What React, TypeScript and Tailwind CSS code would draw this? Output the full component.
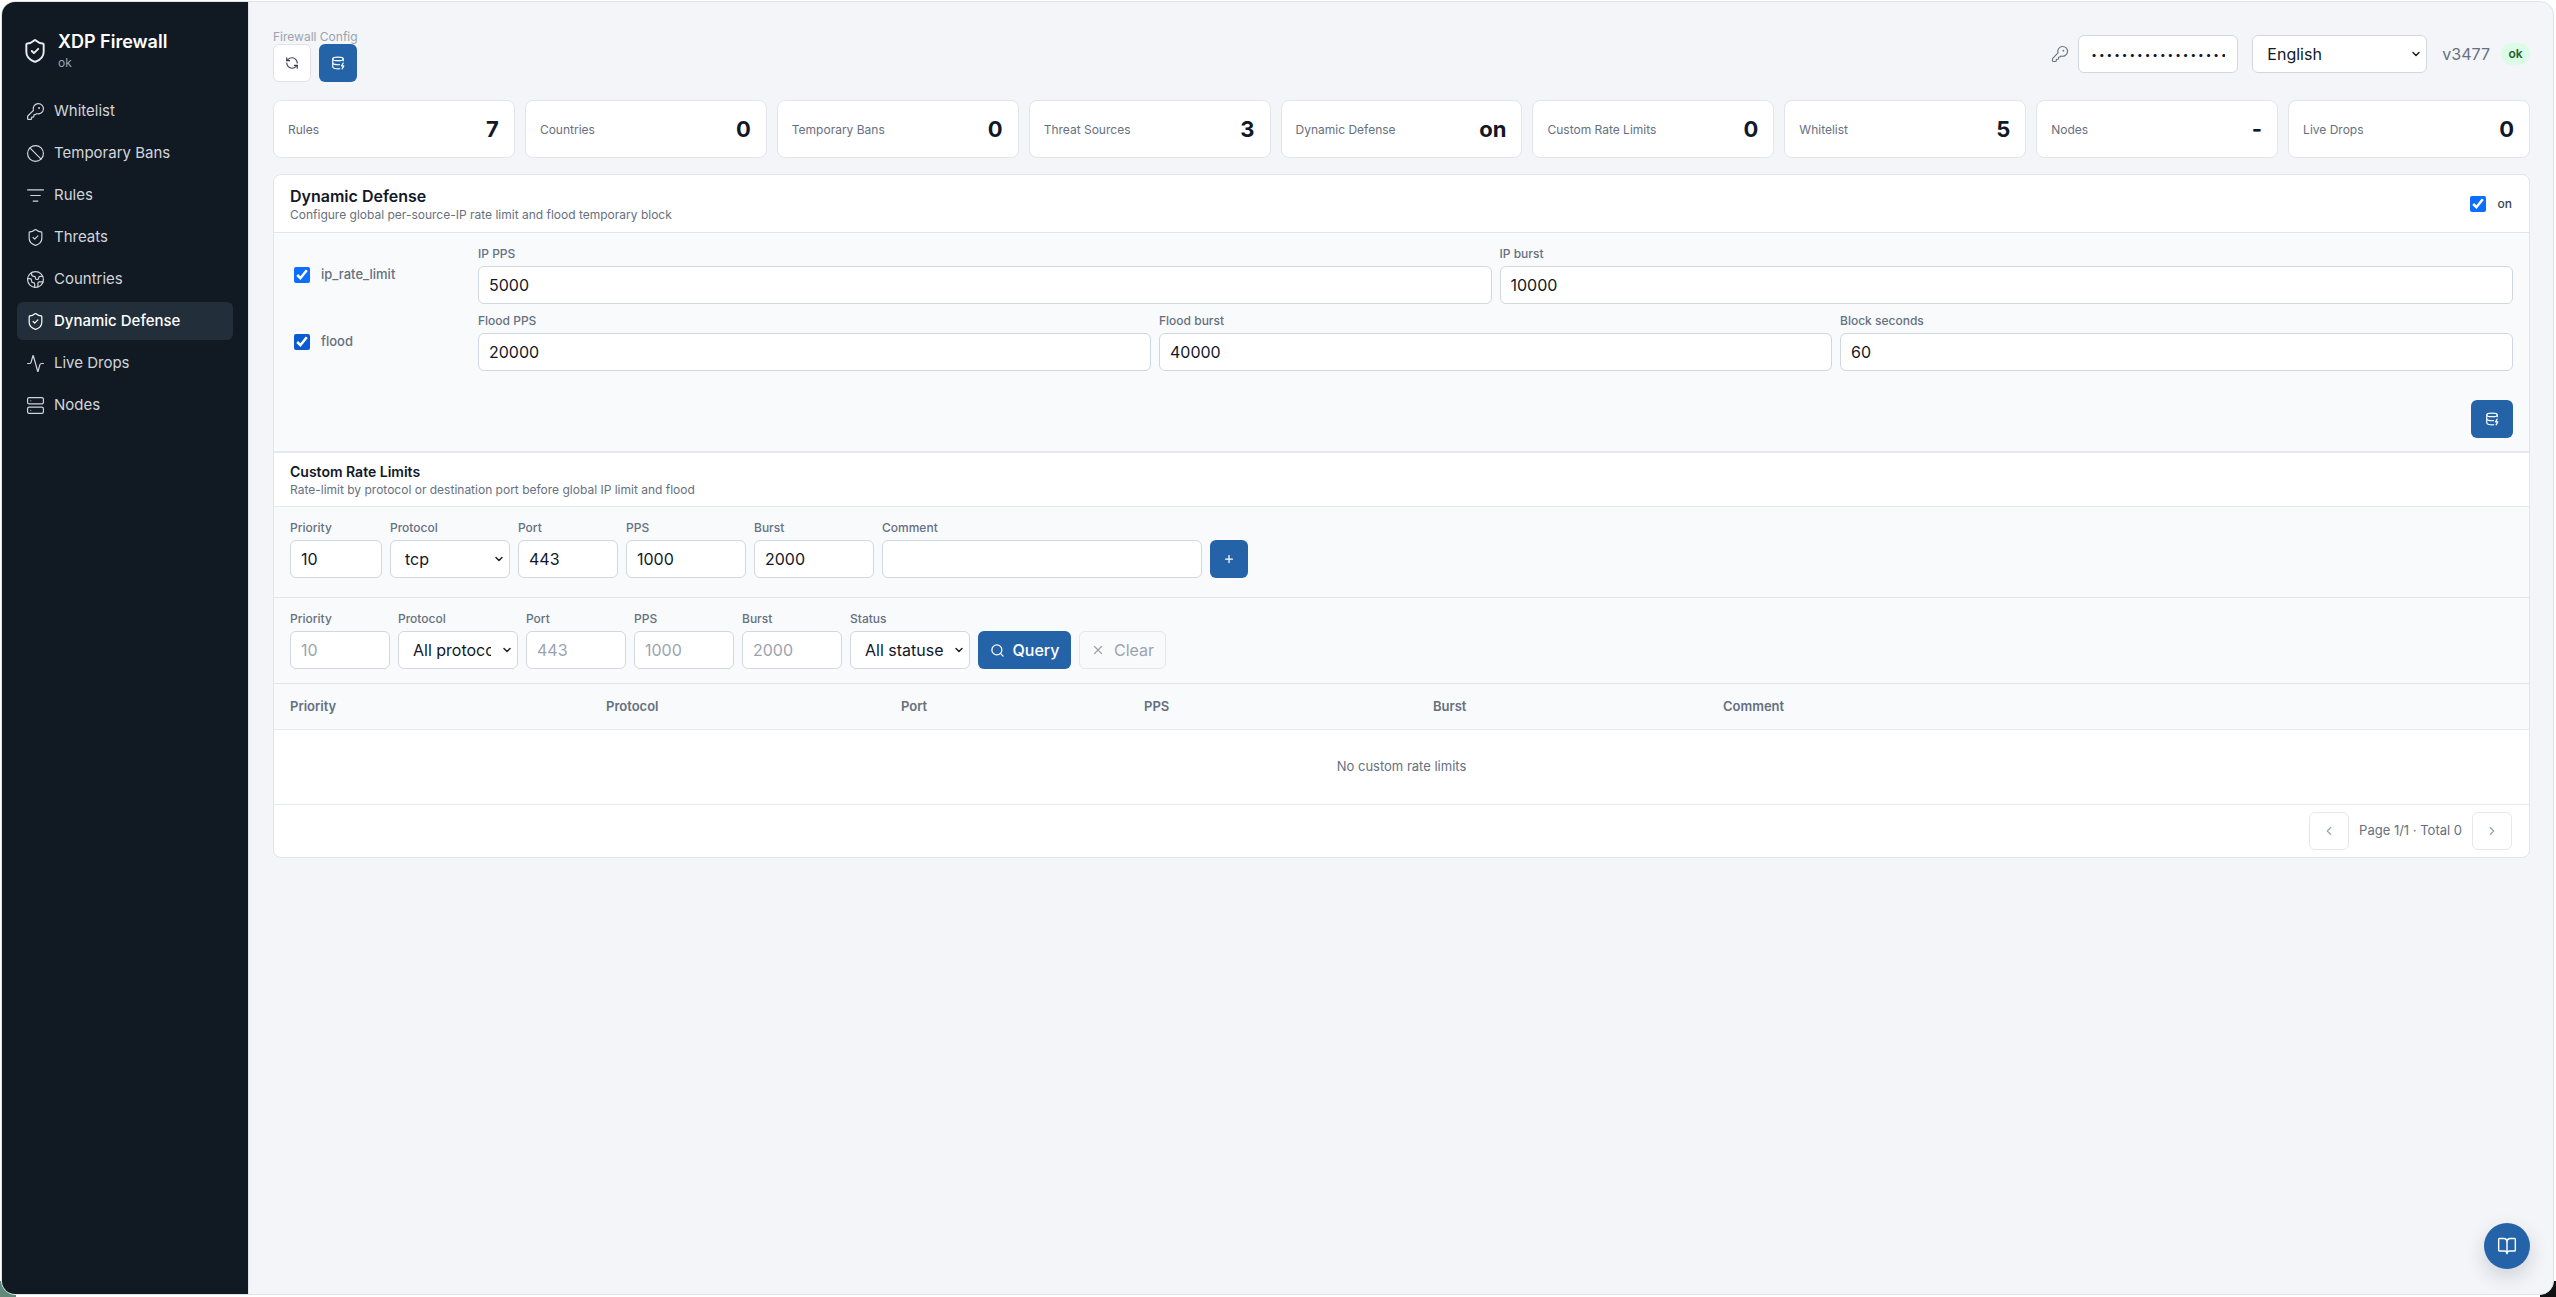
import {
  Activity,
  Ban,
  BookOpen,
  ChevronDown,
  ChevronLeft,
  ChevronRight,
  DatabaseZap,
  Earth,
  KeyRound,
  ListFilter,
  Plus,
  RefreshCcw,
  Search,
  Server,
  ShieldCheck,
  X,
} from "lucide-react";

const navItems = [
  { label: "Whitelist", icon: KeyRound },
  { label: "Temporary Bans", icon: Ban },
  { label: "Rules", icon: ListFilter },
  { label: "Threats", icon: ShieldCheck },
  { label: "Countries", icon: Earth },
  { label: "Dynamic Defense", icon: ShieldCheck, active: true },
  { label: "Live Drops", icon: Activity },
  { label: "Nodes", icon: Server },
];

const stats = [
  { label: "Rules", value: "7" },
  { label: "Countries", value: "0" },
  { label: "Temporary Bans", value: "0" },
  { label: "Threat Sources", value: "3" },
  { label: "Dynamic Defense", value: "on" },
  { label: "Custom Rate Limits", value: "0" },
  { label: "Whitelist", value: "5" },
  { label: "Nodes", value: "-" },
  { label: "Live Drops", value: "0" },
];

const inputClass =
  "h-[38px] w-full rounded-[6px] border border-[#d1d7de] bg-white px-[10px] text-[16px] text-[#111827] placeholder:text-[#9ca3af] outline-none";

const Field = ({ label, className, children }: { label: string; className?: string; children: React.ReactNode }) => (
  <div className={className}>
    <div className="mb-[5px] h-[14px] text-[12px] leading-[14px] font-medium text-[#667080]">{label}</div>
    {children}
  </div>
);

const TextField = ({ label, value, placeholder, className }: { label: string; value?: string; placeholder?: string; className?: string }) => (
  <Field label={label} className={className}>
    <input className={inputClass} defaultValue={value} placeholder={placeholder} />
  </Field>
);

const SelectBox = ({ value, className }: { value: string; className?: string }) => (
  <div className={`relative ${className ?? ""}`}>
    <select
      defaultValue={value}
      className="h-[38px] w-full appearance-none rounded-[6px] border border-[#d1d7de] bg-white pr-[26px] pl-[14px] text-[16px] text-[#111827] outline-none"
    >
      <option>{value}</option>
    </select>
    <ChevronDown size={12} strokeWidth={3} className="pointer-events-none absolute top-[13px] right-[5px] text-[#222]" />
  </div>
);

const PrimaryIconButton = ({ children, className }: { children: React.ReactNode; className?: string }) => (
  <button className={`flex h-[38px] items-center justify-center rounded-[6px] bg-[#2563a8] text-white ${className ?? ""}`}>
    {children}
  </button>
);

export default function App() {
  return (
    <div className="relative h-screen overflow-hidden bg-white pt-[1px] pr-[2px] pb-[2px] pl-[1px] font-['Inter',sans-serif]">
      {/* desktop showing through the window corners */}
      <div className="absolute bottom-0 left-0 h-[16px] w-[16px] bg-[#5f8a78]" />
      <div className="absolute right-0 bottom-0 h-[16px] w-[16px] bg-[#111]" />

      <div className="relative flex h-full overflow-hidden rounded-[14px] border border-[#dfe3e8] bg-[#f3f5f8]">
        {/* Sidebar */}
        <aside className="w-[247px] shrink-0 border-r border-[#dfe3e8] bg-[#111a22] px-[15px]">
          <div className="flex h-[90px] items-center gap-[10px] pt-[7px] pl-[5px]">
            <ShieldCheck size={26} strokeWidth={1.8} className="text-[#e8ecf0]" />
            <div>
              <div className="text-[18px] leading-[24px] font-semibold text-white">XDP Firewall</div>
              <div className="text-[12px] leading-[18px] text-[#9ca3af]">ok</div>
            </div>
          </div>
          <nav className="flex flex-col gap-[4px]">
            {navItems.map((item) => (
              <div
                key={item.label}
                className={`flex h-[38px] items-center gap-[9px] rounded-[6px] px-[9px] text-[15px] ${
                  item.active ? "bg-[#222e3a] font-medium text-white" : "text-[#d1d5db]"
                }`}
              >
                <item.icon size={19} strokeWidth={1.5} />
                {item.label}
              </div>
            ))}
          </nav>
        </aside>

        {/* Main Content */}
        <main className="min-w-0 flex-1 pt-[27px] pr-[23px] pl-[24px]">
          <div className="flex items-start justify-between">
            <div>
              <div className="h-[15px] text-[12px] leading-[16px] text-[#9ca3af]">Firewall Config</div>
              <div className="flex gap-[8px]">
                <button className="flex h-[38px] w-[38px] items-center justify-center rounded-[6px] border border-[#dfe3e8] bg-white text-[#374151]">
                  <RefreshCcw size={14} />
                </button>
                <PrimaryIconButton className="w-[38px]">
                  <DatabaseZap size={14} />
                </PrimaryIconButton>
              </div>
            </div>
            <div className="mt-[6px] flex items-center">
              <KeyRound size={18} strokeWidth={1.5} className="text-[#6b7280]" />
              <input
                type="password"
                defaultValue="abcdefghijklmnopqrst"
                className="ml-[9px] h-[38px] w-[160px] rounded-[6px] border border-[#d1d7de] bg-white px-[12px] text-[10px] tracking-[2px] text-[#111827] outline-none"
              />
              <SelectBox value="English" className="ml-[14px] w-[175px]" />
              <span className="ml-[15px] text-[16px] text-[#667080]">v3477</span>
              <span className="ml-[11px] flex h-[22px] w-[29px] items-center justify-center rounded-full bg-[#dcfce7] text-[12px] font-semibold text-[#166534]">
                ok
              </span>
            </div>
          </div>

          <div className="mt-[18px] grid grid-cols-9 gap-[10px]">
            {stats.map((s) => (
              <div key={s.label} className="flex h-[58px] items-center justify-between rounded-[8px] border border-[#e2e6eb] bg-white pr-[15px] pl-[14px]">
                <span className="pt-[1px] text-[12px] text-[#667080]">{s.label}</span>
                <span className="text-[22px] font-bold text-[#111827]">{s.value}</span>
              </div>
            ))}
          </div>

          <section className="mt-[16px] overflow-hidden rounded-[8px] border border-[#e2e6eb] bg-white">
            {/* Dynamic Defense */}
            <div className="flex h-[58px] items-center justify-between border-b border-[#e2e6eb] pr-[17px] pl-[16px]">
              <div>
                <h2 className="text-[16px] leading-[22px] font-semibold text-[#111827]">Dynamic Defense</h2>
                <p className="text-[12px] leading-[16px] text-[#667080]">Configure global per-source-IP rate limit and flood temporary block</p>
              </div>
              <label className="flex items-center gap-[12px] text-[12px] font-medium text-[#374151]">
                <input type="checkbox" defaultChecked className="h-4 w-4 accent-[#0d6efd]" />
                on
              </label>
            </div>

            <div className="h-[220px] border-b-2 border-[#e6e9ed] bg-[#f8fafc] pt-[13px] pr-[16px] pl-[16px]">
              <div className="flex h-[58px] items-center">
                <label className="flex w-[188px] shrink-0 items-center gap-[11px] pl-[4px] text-[13px] font-medium text-[#667080]">
                  <input type="checkbox" defaultChecked className="h-4 w-4 accent-[#0d6efd]" />
                  ip_rate_limit
                </label>
                <div className="grid flex-1 grid-cols-2 gap-[8px]">
                  <TextField label="IP PPS" value="5000" />
                  <TextField label="IP burst" value="10000" />
                </div>
              </div>
              <div className="mt-[9px] flex h-[58px] items-center">
                <label className="flex w-[188px] shrink-0 items-center gap-[11px] pl-[4px] text-[13px] font-medium text-[#667080]">
                  <input type="checkbox" defaultChecked className="h-4 w-4 accent-[#0b5bd0]" />
                  flood
                </label>
                <div className="grid flex-1 grid-cols-3 gap-[8px]">
                  <TextField label="Flood PPS" value="20000" />
                  <TextField label="Flood burst" value="40000" />
                  <TextField label="Block seconds" value="60" />
                </div>
              </div>
              <div className="mt-[29px] flex justify-end">
                <PrimaryIconButton className="w-[42px]">
                  <DatabaseZap size={14} />
                </PrimaryIconButton>
              </div>
            </div>

            {/* Custom Rate Limits */}
            <div className="flex h-[54px] flex-col justify-center border-b border-[#e6e9ed] pl-[16px]">
              <h3 className="text-[14px] leading-[20px] font-semibold text-[#111827]">Custom Rate Limits</h3>
              <p className="text-[12px] leading-[16px] text-[#667080]">Rate-limit by protocol or destination port before global IP limit and flood</p>
            </div>

            <div className="flex h-[91px] items-start gap-[8px] border-b border-[#e2e6eb] bg-[#f8fafc] pt-[14px] pl-[16px]">
              <TextField label="Priority" value="10" className="w-[92px]" />
              <Field label="Protocol" className="w-[120px]">
                <SelectBox value="tcp" />
              </Field>
              <TextField label="Port" value="443" className="w-[100px]" />
              <TextField label="PPS" value="1000" className="w-[120px]" />
              <TextField label="Burst" value="2000" className="w-[120px]" />
              <TextField label="Comment" className="w-[320px]" />
              <PrimaryIconButton className="mt-[19px] w-[38px]">
                <Plus size={12} strokeWidth={2.5} />
              </PrimaryIconButton>
            </div>

            <div className="flex h-[86px] items-start gap-[8px] border-b border-[#e2e6eb] bg-[#f8fafc] pt-[14px] pl-[16px]">
              <TextField label="Priority" placeholder="10" className="w-[100px]" />
              <Field label="Protocol" className="w-[120px]">
                <SelectBox value="All protocols" />
              </Field>
              <TextField label="Port" placeholder="443" className="w-[100px]" />
              <TextField label="PPS" placeholder="1000" className="w-[100px]" />
              <TextField label="Burst" placeholder="2000" className="w-[100px]" />
              <Field label="Status" className="w-[120px]">
                <SelectBox value="All statuses" />
              </Field>
              <button className="mt-[19px] flex h-[38px] w-[93px] items-center justify-center gap-[8px] rounded-[6px] bg-[#2563a8] text-[16px] font-medium text-white">
                <Search size={15} />
                Query
              </button>
              <button className="mt-[19px] flex h-[38px] w-[87px] items-center justify-center gap-[9px] rounded-[6px] border border-[#e5e7eb] text-[16px] text-[#9ca3af]">
                <X size={14} />
                Clear
              </button>
            </div>

            <table className="w-full table-fixed text-left">
              <thead>
                <tr className="h-[45px] border-b border-[#e6e9ed] bg-[#f8fafc] text-[13px] font-semibold text-[#667080]">
                  <th className="w-[316px] pl-[16px] font-semibold">Priority</th>
                  <th className="w-[295px] pl-[16px] font-semibold">Protocol</th>
                  <th className="w-[243px] pl-[16px] font-semibold">Port</th>
                  <th className="w-[289px] pl-[16px] font-semibold">PPS</th>
                  <th className="w-[290px] pl-[16px] font-semibold">Burst</th>
                  <th className="pl-[16px] font-semibold">Comment</th>
                </tr>
              </thead>
              <tbody>
                <tr className="h-[75px] border-b border-[#e6e9ed]">
                  <td colSpan={6} className="text-center text-[13px] text-[#667080]">No custom rate limits</td>
                </tr>
              </tbody>
            </table>

            <div className="flex h-[52px] items-center justify-end pr-[17px] text-[13px] text-[#667080]">
              <button className="flex h-[38px] w-[40px] items-center justify-center rounded-[6px] border border-[#e5e7eb] text-[#9ca3af]">
                <ChevronLeft size={14} />
              </button>
              <span className="mx-[10px]">Page 1/1 · Total 0</span>
              <button className="flex h-[38px] w-[40px] items-center justify-center rounded-[6px] border border-[#e5e7eb] text-[#9ca3af]">
                <ChevronRight size={14} />
              </button>
            </div>
          </section>
        </main>

        <button className="absolute right-[23px] bottom-[25px] flex h-[46px] w-[46px] items-center justify-center rounded-full bg-[#2563a8] text-white shadow-[0_8px_20px_rgba(15,23,42,0.16)]">
          <BookOpen size={20} strokeWidth={1.7} />
        </button>
      </div>
    </div>
  );
}
